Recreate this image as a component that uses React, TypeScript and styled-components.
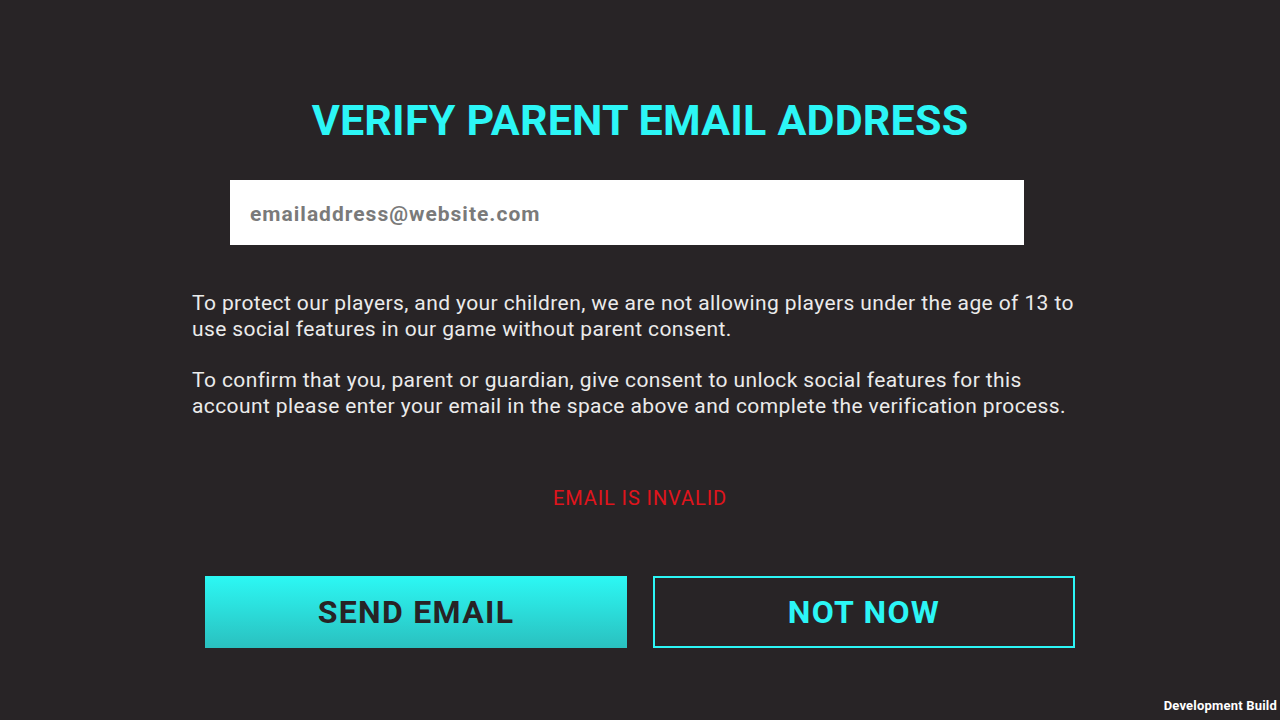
import React from "react";
import styled, { createGlobalStyle } from "styled-components";

const Global = createGlobalStyle`
  html, body { margin: 0; padding: 0; background: #282426; }
  body { font-family: Roboto, "Noto Sans", sans-serif; }
`;

const Screen = styled.div`
  position: relative;
  width: 1280px;
  height: 720px;
  background: #282426;
  display: flex;
  flex-direction: column;
  align-items: center;
  box-sizing: border-box;
  padding-top: 96px;
  overflow: hidden;
`;

const Title = styled.h1`
  margin: 0;
  font-family: Roboto, sans-serif;
  font-weight: 700;
  font-size: 43px;
  line-height: 48px;
  letter-spacing: 0.2px;
  color: #2cf6f6;
  text-transform: uppercase;
`;

const EmailInput = styled.input`
  margin-top: 36px;
  margin-left: -26px;
  width: 794px;
  height: 65px;
  box-sizing: border-box;
  border: none;
  outline: none;
  background: #ffffff;
  padding: 2px 20px 0;
  font-family: Roboto, sans-serif;
  font-weight: 700;
  font-size: 21px;
  letter-spacing: 1px;
  color: #7a7a7a;
  &::placeholder { color: #7a7a7a; opacity: 1; }
`;

const Body = styled.div`
  margin-top: 45px;
  width: 896px;
  display: flex;
  flex-direction: column;
  gap: 25px;
`;

const Para = styled.p`
  margin: 0;
  font-family: Roboto, sans-serif;
  font-size: 21px;
  line-height: 26px;
  letter-spacing: 0.4px;
  color: #ebebeb;
  white-space: nowrap;
`;

const ErrorText = styled.div`
  margin-top: 67px;
  font-family: Roboto, sans-serif;
  font-size: 20px;
  line-height: 24px;
  letter-spacing: 0.9px;
  color: #e0141c;
  text-transform: uppercase;
`;

const ButtonRow = styled.div`
  margin-top: 66px;
  display: flex;
  gap: 26px;
`;

const Button = styled.button<{ $primary?: boolean }>`
  width: 422px;
  height: 72px;
  box-sizing: border-box;
  font-family: Roboto, sans-serif;
  font-weight: 700;
  font-size: 32px;
  letter-spacing: 1.3px;
  text-transform: uppercase;
  cursor: pointer;
  ${(p) =>
    p.$primary
      ? `
    border: none;
    background: linear-gradient(180deg, #2cf8f4 0%, #2ac0bf 100%);
    color: #272325;
  `
      : `
    border: 2px solid #2cf6f6;
    background: transparent;
    color: #2cf6f6;
  `}
`;

const DevBuild = styled.div`
  position: absolute;
  right: 3px;
  bottom: 7px;
  font-family: Roboto, sans-serif;
  font-weight: 700;
  font-size: 13px;
  letter-spacing: 0.2px;
  color: #ffffff;
`;

export default function App() {
  return (
    <>
      <Global />
      <Screen>
        <Title>Verify Parent Email Address</Title>
        <EmailInput placeholder="emailaddress@website.com" />
        <Body>
          <Para>
            To protect our players, and your children, we are not allowing players under the age of 13 to
            <br />
            use social features in our game without parent consent.
          </Para>
          <Para>
            To confirm that you, parent or guardian, give consent to unlock social features for this
            <br />
            account please enter your email in the space above and complete the verification process.
          </Para>
        </Body>
        <ErrorText>Email is invalid</ErrorText>
        <ButtonRow>
          <Button $primary>Send Email</Button>
          <Button>Not Now</Button>
        </ButtonRow>
        <DevBuild>Development Build</DevBuild>
      </Screen>
    </>
  );
}
